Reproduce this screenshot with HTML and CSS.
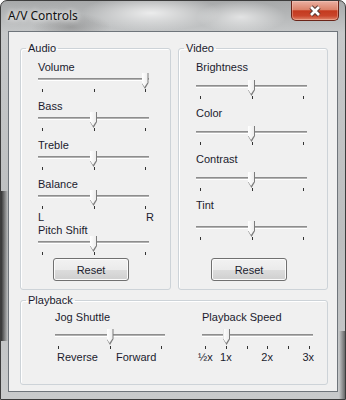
FILE: index.html
```html
<!DOCTYPE html>
<html lang="en">
<head>
  <meta charset="UTF-8">
  <title>A/V Controls</title>
  <link rel="stylesheet" href="styles.css">
</head>
<body>
  <div class="window">
    <div class="titlebar">
      <span class="title">A/V Controls</span>
      <button class="close">
        <svg width="14" height="12" viewBox="0 0 14 12">
          <path d="M3 2L11 10M11 2L3 10" stroke="#5b3a33" stroke-width="4.6"/>
          <path d="M3 2L11 10M11 2L3 10" stroke="#fff" stroke-width="2.6"/>
        </svg>
      </button>
    </div>
    <div class="client">
      <fieldset class="group audio">
        <legend>Audio</legend>
        <div class="group-body">
          <div class="field">
            <div class="label">Volume</div>
            <div class="track"><span class="thumb" style="--v: 1"></span></div>
            <div class="ticks"><i></i><i></i><i></i></div>
          </div>
          <div class="field">
            <div class="label">Bass</div>
            <div class="track"><span class="thumb" style="--v: 0.5"></span></div>
            <div class="ticks"><i></i><i></i><i></i></div>
          </div>
          <div class="field">
            <div class="label">Treble</div>
            <div class="track"><span class="thumb" style="--v: 0.5"></span></div>
            <div class="ticks"><i></i><i></i><i></i></div>
          </div>
          <div class="field balance">
            <div class="label">Balance</div>
            <div class="track"><span class="thumb" style="--v: 0.5"></span></div>
            <div class="ticks"><i></i><i></i><i></i></div>
            <div class="lr"><span>L</span><span>R</span></div>
          </div>
          <div class="field last">
            <div class="label">Pitch Shift</div>
            <div class="track"><span class="thumb" style="--v: 0.5"></span></div>
            <div class="ticks"><i></i><i></i><i></i></div>
          </div>
          <button class="btn">Reset</button>
        </div>
      </fieldset>

      <fieldset class="group video">
        <legend>Video</legend>
        <div class="group-body">
          <div class="field">
            <div class="label">Brightness</div>
            <div class="track"><span class="thumb" style="--v: 0.5"></span></div>
            <div class="ticks"><i></i><i></i><i></i></div>
          </div>
          <div class="field">
            <div class="label">Color</div>
            <div class="track"><span class="thumb" style="--v: 0.5"></span></div>
            <div class="ticks"><i></i><i></i><i></i></div>
          </div>
          <div class="field">
            <div class="label">Contrast</div>
            <div class="track"><span class="thumb" style="--v: 0.5"></span></div>
            <div class="ticks"><i></i><i></i><i></i></div>
          </div>
          <div class="field tint">
            <div class="label">Tint</div>
            <div class="track"><span class="thumb" style="--v: 0.5"></span></div>
            <div class="ticks"><i></i><i></i><i></i></div>
          </div>
          <button class="btn">Reset</button>
        </div>
      </fieldset>

      <fieldset class="group playback">
        <legend>Playback</legend>
        <div class="group-body">
          <div class="field jog">
            <div class="label">Jog Shuttle</div>
            <div class="track"><span class="thumb" style="--v: 0.5"></span></div>
            <div class="ticks"><i></i><i></i><i></i></div>
            <div class="dir"><span>Reverse</span><span>Forward</span></div>
          </div>
          <div class="field speed">
            <div class="label">Playback Speed</div>
            <div class="track"><span class="thumb" style="--v: 0.2"></span></div>
            <div class="ticks"><i></i><i></i><i></i><i></i><i></i><i></i></div>
            <div class="speeds"><span>½x</span><span>1x</span><span></span><span>2x</span><span></span><span>3x</span></div>
          </div>
        </div>
      </fieldset>
    </div>
  </div>
</body>
</html>
```

FILE: styles.css
```css
body {
  margin: 0;
  font: 11px "Liberation Sans", Arial, sans-serif;
  color: #1b1b2e;
}
.window {
  box-sizing: border-box;
  height: 400px;
  border: 1px solid #3c3c3c;
  border-radius: 7px 7px 0 0;
  padding: 0 7px;
  background:
    linear-gradient(to right, rgba(25,25,25,.85), rgba(25,25,25,0) 7px) 0 190px / 8px 150px no-repeat,
    linear-gradient(to left, rgba(40,40,40,.6), rgba(40,40,40,0) 6px) 100% 330px / 8px 70px no-repeat,
    radial-gradient(ellipse 70px 18px at 150px 12px, rgba(255,255,255,.75), transparent),
    radial-gradient(ellipse 45px 16px at 240px 16px, rgba(255,255,255,.6), transparent),
    radial-gradient(ellipse 40px 14px at 70px 26px, rgba(120,120,120,.5), transparent),
    linear-gradient(#a7a9aa, #c6c8c9 32px, #bcbebf 60%, #c8cacb);
}
.titlebar {
  height: 30px;
  display: flex;
  justify-content: space-between;
  align-items: flex-start;
}
.title {
  font: 12px "Noto Sans", sans-serif;
  color: #111;
  padding-top: 6px;
  text-shadow: 0 0 5px #fff, 0 0 9px #fff;
}
.close {
  width: 48px;
  height: 20px;
  margin-right: -1px;
  padding: 0;
  border: 1px solid #6a2418;
  border-top: none;
  border-radius: 0 0 5px 5px;
  background: linear-gradient(#eab0a2, #dc836b 45%, #c43a1f 52%, #c9452b 78%, #e0866b);
  box-shadow: inset 0 0 0 1px rgba(255,220,210,.35);
  display: flex;
  align-items: center;
  justify-content: center;
}
.client {
  box-sizing: border-box;
  height: 361px;
  border: 1px solid #6f757b;
  background: #f0f0f0;
  padding: 10px 10px 0 11px;
  display: grid;
  grid-template-columns: 151px 150px;
  grid-template-rows: 248px 91px;
  gap: 4px 7px;
}
.group {
  margin: 0;
  padding: 0;
  min-width: 0;
  border: 1px solid #cdd3d8;
  border-radius: 3px;
  box-shadow: inset 1px 1px #fff;
  display: flex;
  flex-direction: column;
}
.group legend {
  padding: 0 2px;
  margin-left: 5px;
  line-height: 13px;
}
.group-body {
  flex: 1;
  display: flex;
  flex-direction: column;
  padding: 6px 0 8px 17px;
}
.label { line-height: 13px; }
.field { margin-bottom: 8px; }
.track {
  position: relative;
  width: 111px;
  height: 3px;
  margin-top: 4px;
  background: linear-gradient(#8d8d8d 0 1px, #b2b2b2 1px 2px, #fff 2px);
}
.thumb {
  position: absolute;
  top: -5px;
  left: calc(0.5px + (100% - 8px) * var(--v));
  width: 7px;
  height: 16px;
  background: #7c7c7c;
  clip-path: polygon(0 0, 100% 0, 100% 62%, 50% 100%, 0 62%);
}
.thumb::before {
  content: "";
  position: absolute;
  left: 0;
  top: 0;
  width: 6px;
  height: 14px;
  background: linear-gradient(to right, #fff, #ededed);
  clip-path: polygon(0 0, 100% 0, 100% 68%, 50% 100%, 0 68%);
}
.ticks {
  box-sizing: border-box;
  width: 111px;
  display: flex;
  justify-content: space-between;
  padding: 0 3px 0 4px;
  margin-top: 8px;
}
.ticks i {
  width: 1px;
  height: 3px;
  background: #333;
}
.balance { margin-bottom: 1px; }
.lr {
  width: 116px;
  display: flex;
  justify-content: space-between;
  margin-top: 2px;
  line-height: 12px;
}
.last { margin-bottom: 0; }
.btn {
  width: 76px;
  height: 23px;
  margin: auto 0 0 15px;
  padding: 0;
  font: inherit;
  color: inherit;
  border: 1px solid #707070;
  border-radius: 3px;
  background: linear-gradient(#f2f2f2, #ebebeb 50%, #dddddd 50%, #cfcfcf);
  box-shadow: inset 0 0 0 1px #fbfbfb;
}

.video .track { margin-top: 11px; }
.video .tint .track { margin-top: 14px; }

.playback { grid-column: 1 / -1; }
.playback .group-body {
  flex-direction: row;
  gap: 37px;
  padding: 4px 0 0 34px;
}
.playback .field { margin: 0; }
.playback .track { margin-top: 10px; }
.playback .ticks { margin-top: 9px; padding: 0 3px; }
.jog .track, .jog .ticks { width: 110px; }
.dir {
  display: flex;
  gap: 18px;
  padding-left: 2px;
  margin-top: 2px;
  line-height: 13px;
}
.speeds {
  display: grid;
  grid-template-columns: repeat(6, 20.6px);
  margin: 2px 0 0 -7px;
  line-height: 13px;
  text-align: center;
}
```
